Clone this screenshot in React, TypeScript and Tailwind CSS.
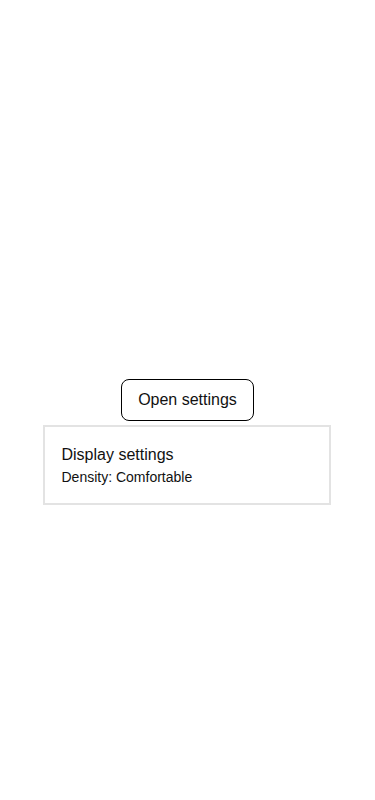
import React from "react";

export default function App() {
  return (
    <div
      className="min-h-screen bg-white flex items-center justify-center"
      style={{ fontFamily: '"Liberation Sans", Arial, sans-serif' }}
    >
      <div className="relative">
        <button className="rounded-lg border border-black bg-white px-4 py-2 text-base leading-6 text-[#111]">
          Open settings
        </button>
        <div className="absolute left-1/2 top-[calc(100%+4px)] -translate-x-1/2 w-[288px] border-2 border-[#e3e3e3] bg-white p-4">
          <div className="text-base leading-6 text-[#111]">Display settings</div>
          <div className="text-sm leading-5 text-[#111]">Density: Comfortable</div>
        </div>
      </div>
    </div>
  );
}
